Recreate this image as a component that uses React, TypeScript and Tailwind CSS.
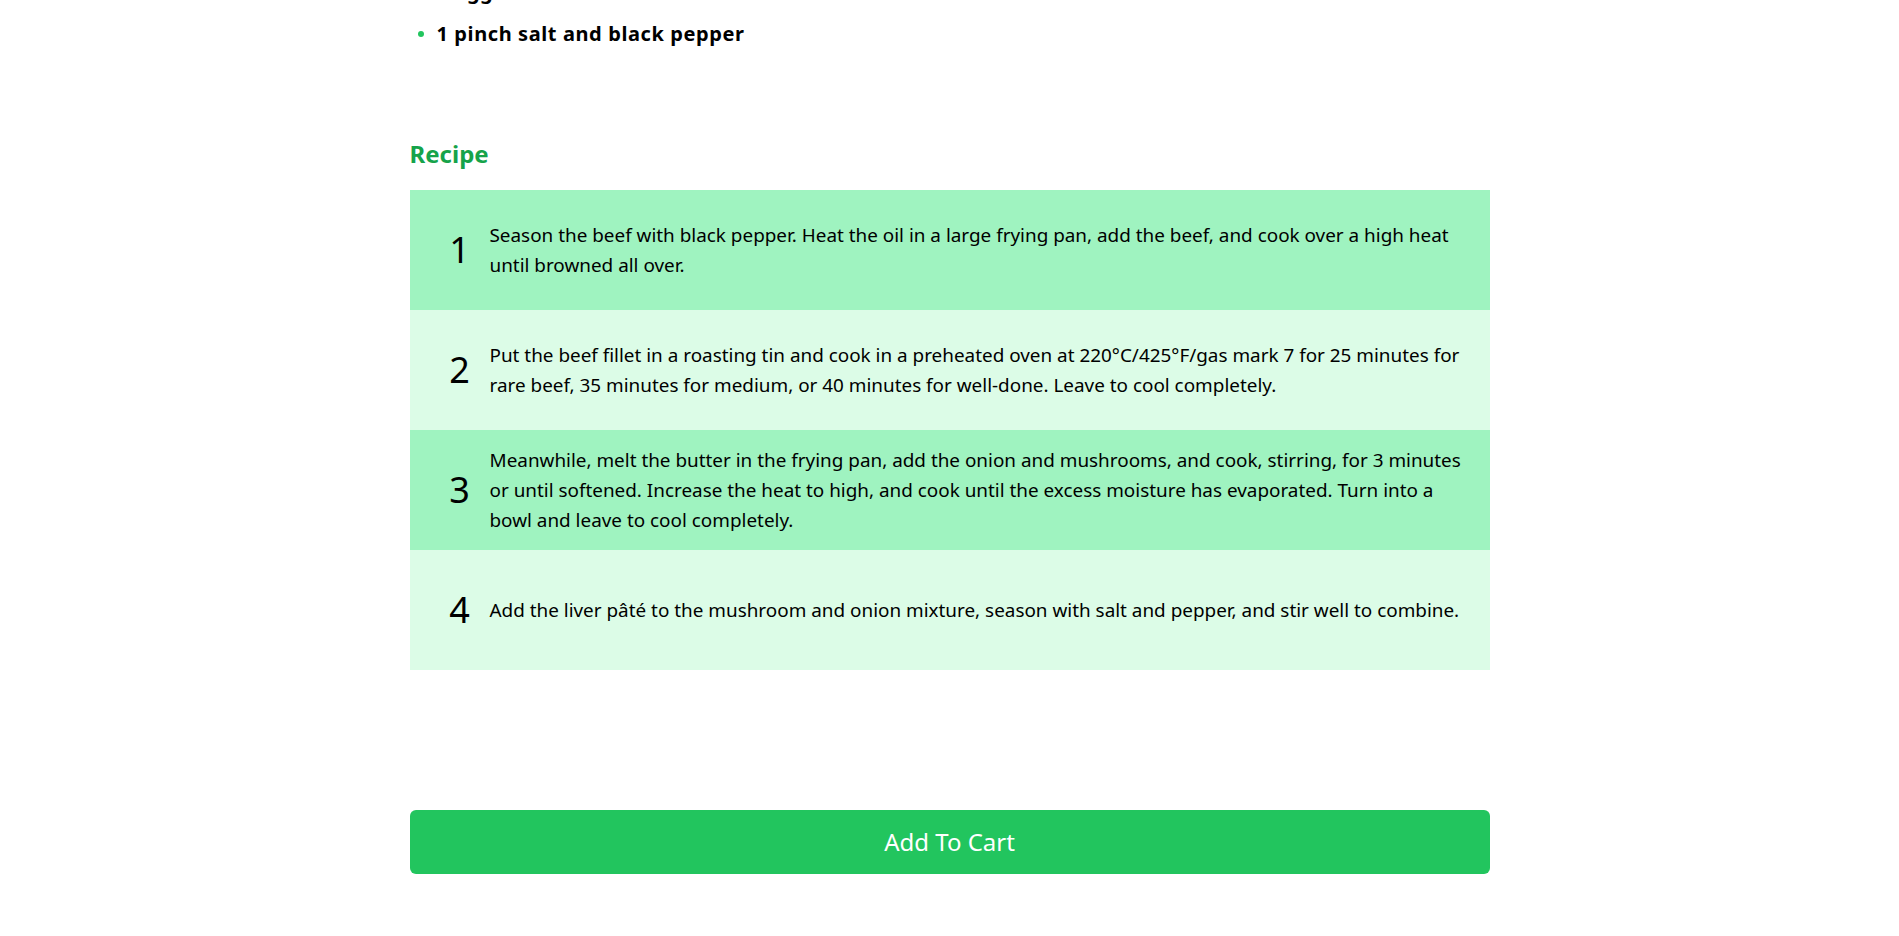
import React from "react";

const ingredients = ["1 egg", "1 pinch salt and black pepper"];

const steps = [
  "Season the beef with black pepper. Heat the oil in a large frying pan, add the beef, and cook over a high heat until browned all over.",
  "Put the beef fillet in a roasting tin and cook in a preheated oven at 220°C/425°F/gas mark 7 for 25 minutes for rare beef, 35 minutes for medium, or 40 minutes for well-done. Leave to cool completely.",
  "Meanwhile, melt the butter in the frying pan, add the onion and mushrooms, and cook, stirring, for 3 minutes or until softened. Increase the heat to high, and cook until the excess moisture has evaporated. Turn into a bowl and leave to cool completely.",
  "Add the liver pâté to the mushroom and onion mixture, season with salt and pepper, and stir well to combine.",
];

export default function App() {
  return (
    <div className="w-full overflow-hidden bg-white font-['Noto_Sans',sans-serif] text-black">
      <div className="mx-auto w-[1080px] pb-[62px]">
        <ul className="mt-[-22px] flex flex-col gap-3.5">
          {ingredients.map((item) => (
            <li key={item} className="flex items-center gap-[13px] pl-2">
              <span className="h-1.5 w-1.5 shrink-0 rounded-full bg-[#22c55e]" />
              <span className="text-[20px] font-bold leading-7 tracking-[0.6px]">{item}</span>
            </li>
          ))}
        </ul>

        <h2 className="mt-[90px] mb-5 text-2xl leading-8 font-bold text-[#16a34a]">Recipe</h2>

        <div className="flex flex-col">
          {steps.map((step, i) => (
            <div
              key={i}
              className={`flex h-[120px] items-center pl-[26px] pr-6 ${i % 2 === 0 ? "bg-[#9ff3c0]" : "bg-[#dcfce7]"}`}
            >
              <div className="w-12 shrink-0 text-center text-[36px] leading-none font-normal">{i + 1}</div>
              <p className="ml-1.5 text-[18.9px] leading-[30px]">{step}</p>
            </div>
          ))}
        </div>

        <button className="mt-[140px] flex h-16 w-full items-center justify-center rounded-md bg-[#22c55e] text-2xl text-white">
          Add To Cart
        </button>
      </div>
    </div>
  );
}
